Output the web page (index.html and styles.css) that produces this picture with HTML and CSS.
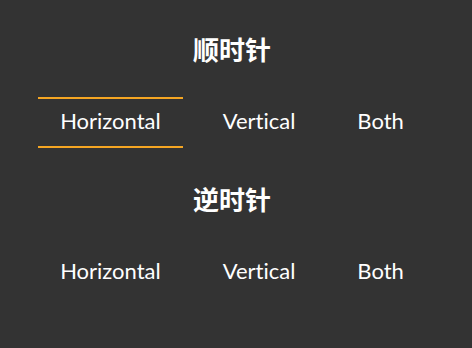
FILE: index.html
```html
<!DOCTYPE html>
<html>
<head>
<meta charset="utf-8">
<link rel="stylesheet" href="styles.css">
</head>
<body>
<div class="page">
  <section class="group">
    <h2 class="title">顺时针</h2>
    <div class="tabs">
      <button class="tab active">Horizontal</button>
      <button class="tab">Vertical</button>
      <button class="tab">Both</button>
    </div>
  </section>
  <section class="group">
    <h2 class="title">逆时针</h2>
    <div class="tabs">
      <button class="tab">Horizontal</button>
      <button class="tab">Vertical</button>
      <button class="tab">Both</button>
    </div>
  </section>
</div>
</body>
</html>
```
FILE: styles.css
```css
html, body {
  margin: 0;
  padding: 0;
  background: #333333;
}
body {
  width: 472px;
  height: 348px;
  overflow: hidden;
  font-family: Lato, "Noto Sans CJK SC", sans-serif;
  color: #ffffff;
}
.page {
  width: 464px;
  padding-top: 35px;
  display: flex;
  flex-direction: column;
}
.group {
  display: flex;
  flex-direction: column;
  align-items: center;
  height: 150px;
}
.title {
  margin: 0;
  font-family: Lato, "Noto Sans CJK SC", sans-serif;
  font-size: 26px;
  font-weight: 700;
  line-height: 31px;
  height: 31px;
}
.tabs {
  margin-top: 31px;
  display: flex;
  gap: 18px;
}
.tab {
  font-family: Lato, sans-serif;
  font-size: 22px;
  font-variant-ligatures: none;
  color: #ffffff;
  background: transparent;
  border: none;
  border-top: 2px solid transparent;
  border-bottom: 2px solid transparent;
  height: 51px;
  padding: 0 22px 4px;
  margin: 0;
  line-height: 26px;
}
.tab.active {
  border-top-color: #f5a623;
  border-bottom-color: #f5a623;
}
```
